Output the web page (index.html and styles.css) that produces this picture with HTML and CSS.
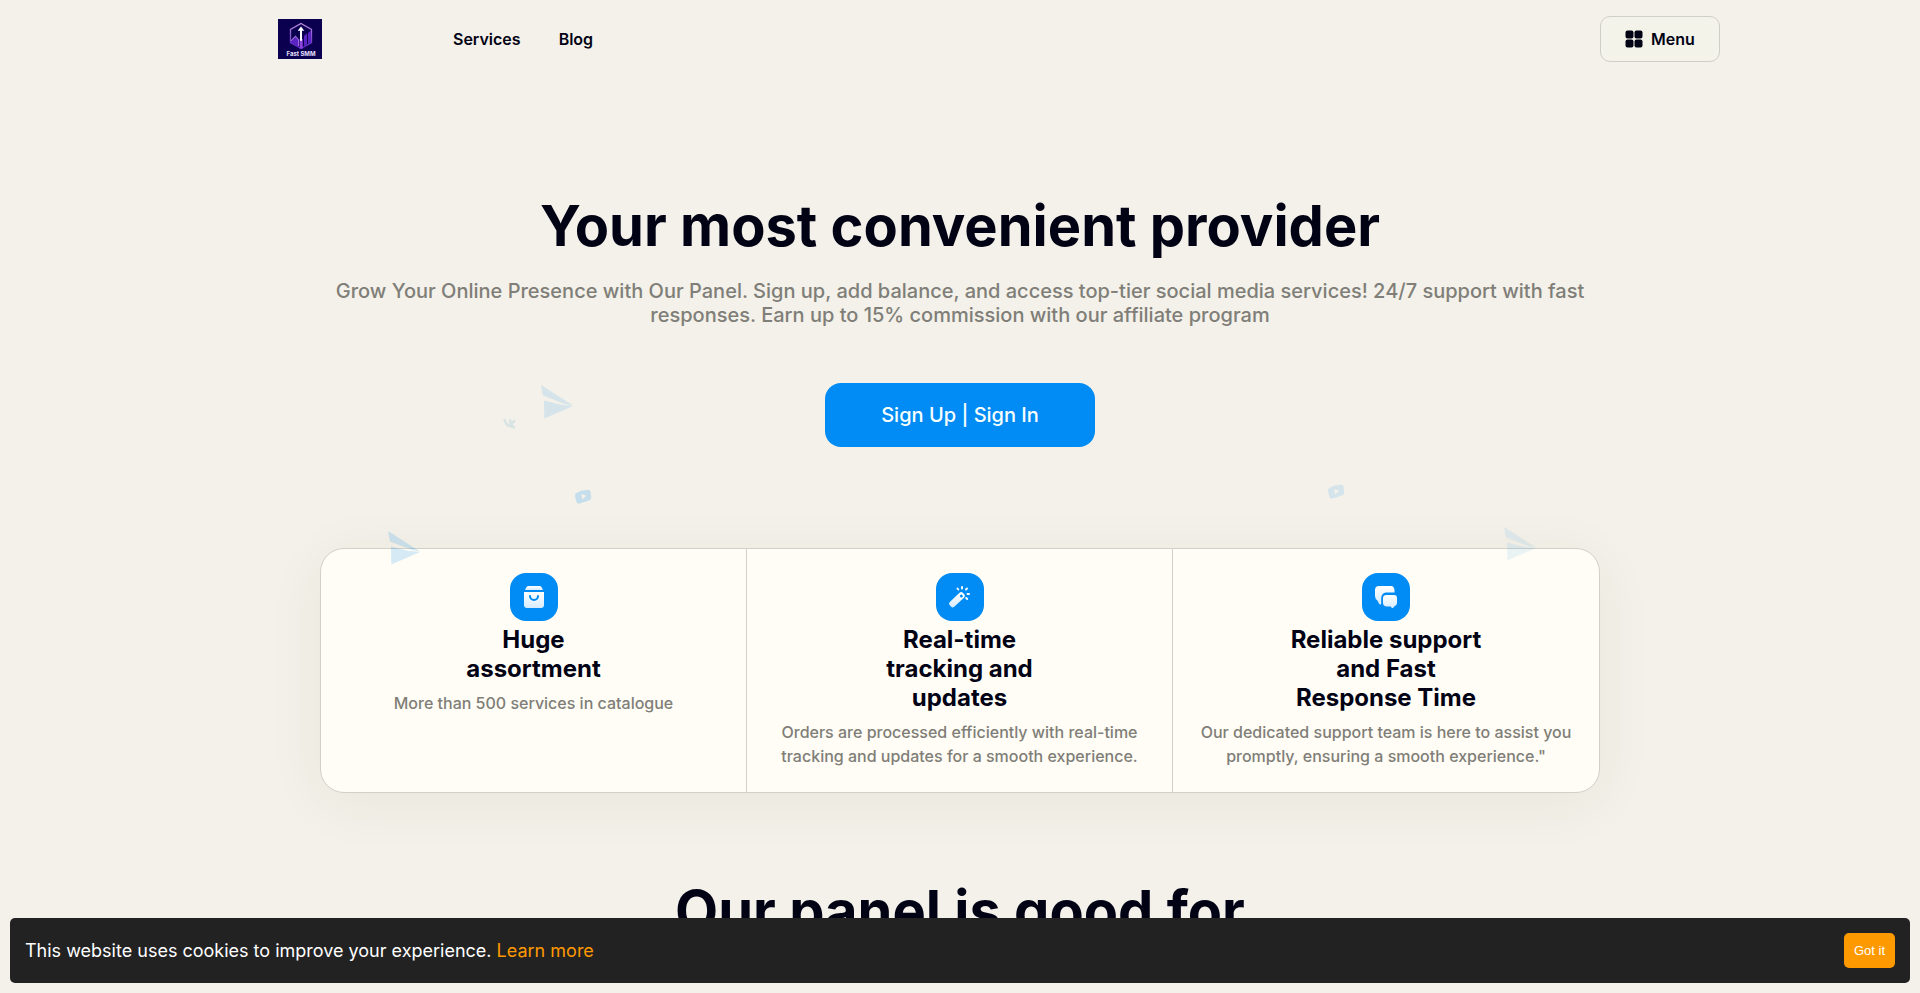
FILE: index.html
```html
<!DOCTYPE html>
<html lang="en">
<head>
<meta charset="utf-8">
<meta name="viewport" content="width=device-width, initial-scale=1">
<title>Fast SMM</title>
<link rel="stylesheet" href="styles.css">
</head>
<body>
<svg class="defs" aria-hidden="true">
  <defs>
    <linearGradient id="white-fade" x1="0" y1="0" x2="0" y2="1">
      <stop offset="0" stop-color="#fff"/><stop offset="1" stop-color="#d6ecff"/>
    </linearGradient>
    <linearGradient id="logo-fade" x1="0" y1="0" x2="0" y2="1">
      <stop offset="0" stop-color="#b98bd8"/><stop offset="1" stop-color="#5a24c4"/>
    </linearGradient>
    <symbol id="plane" viewBox="0 0 32 34"><path d="M0 0 32 20.500 24 19 2 10.500Z M3 15.500 20 19.800 32 21 3.300 33.500Z"/></symbol>
    <symbol id="video" viewBox="0 0 18 16"><path fill-rule="evenodd" d="M2 4.200 5 2.800 7 1.800 14.500 .8Q16.300 1 16.600 3L17.300 8.500Q17.300 10.500 15.500 11.200L5 14.800Q3.200 15 2.500 13L1 7.500Q.6 5 2 4.200ZM7.200 5 8.200 10.600 12.400 6.800Z"/></symbol>
  </defs>
</svg>

<header class="header">
  <a class="logo" href="#" aria-label="Fast SMM">
    <svg viewBox="0 0 44 40" width="44" height="40">
      <path fill="#0b0050" d="M0 0h44v40H0z"/>
      <path fill="none" stroke="url(#logo-fade)" stroke-width="1.300" d="M23 4.500 33.500 10.500V23.500L23 29.500 12.500 23.500V10.500Z"/>
      <path fill="none" stroke="#a06be0" stroke-width="1.200" d="M13 22 17.500 17.500 20.500 21V27"/>
      <path fill="#5a24c4" d="M13 22.500 17.500 18.500 20 21V27.500L12.500 23.500ZM26 17 29 14.500V25.500L26 27ZM30 14 33 11.500V23.500L30 25Z"/>
      <path fill="#8c46df" d="M21.700 20h3v9.500h-3z"/>
      <path fill="#fff" d="m23 7.500 3.300 4.300h-2.300v10h-2v-10h-2.300Z"/>
      <text class="logo-text" x="23" y="37" text-anchor="middle">Fast SMM</text>
    </svg>
  </a>
  <nav class="nav">
    <a href="#">Services</a>
    <a href="#">Blog</a>
  </nav>
  <button class="menu" type="button">
    <svg viewBox="0 0 18 18" width="18" height="18" fill="currentColor" aria-hidden="true">
      <rect x=".5" y=".5" width="8" height="8" rx="2"/><rect x="9.500" y=".5" width="8" height="8" rx="2"/>
      <rect x=".5" y="9.500" width="8" height="8" rx="2"/><rect x="9.500" y="9.500" width="8" height="8" rx="2"/>
    </svg>
    Menu
  </button>
</header>

<main class="main">
  <section class="hero">
    <h1 class="heading">Your most convenient provider</h1>
    <p class="lead">Grow Your Online Presence with Our Panel. Sign up, add balance, and access top-tier social media services! 24/7 support with fast responses. Earn up to 15% commission with our affiliate program</p>
    <a class="cta" href="#">Sign Up | Sign In</a>
  </section>

  <section class="features">
    <article class="feature">
      <span class="badge">
        <svg viewBox="0 0 24 24" width="24" height="24" aria-hidden="true">
          <path fill="url(#white-fade)" d="M6.500 1h11q1.200 0 2 1L21 5H3l1.500-3q.8-1 2-1Z"/>
          <path fill="url(#white-fade)" d="M2 7h20v13a3 3 0 0 1-3 3H5a3 3 0 0 1-3-3Z"/>
          <path fill="none" stroke="#008cf4" stroke-width="2" stroke-linecap="round" d="M8 11a4 4 0 0 0 8 0"/>
        </svg>
      </span>
      <h2 class="feature-title">Huge assortment</h2>
      <p class="feature-text">More than 500 services in catalogue</p>
    </article>
    <article class="feature">
      <span class="badge">
        <svg viewBox="0 0 24 24" width="24" height="24" aria-hidden="true">
          <path fill="url(#white-fade)" fill-rule="evenodd" d="m11.500 7.700-9.700 9.200q-1.500 1.500-.2 3l1.600 1.800q1.500 1.500 3 0l9.800-9q1.900-1.900 0-3.700l-1.200-1.200q-1.700-1.700-3.300-.1ZM12 10.500l1.300-1.200 1.800 1.900-1.300 1.200q-.9.300-1.600-.4t-.2-1.500Z"/>
          <path fill="none" stroke="#effaff" stroke-width="2" stroke-linecap="round" d="M14 2v1.500M9.500 3.500l.8 1M19 3.500l-1 1M19.500 9H21M18.200 13l1 1"/>
        </svg>
      </span>
      <h2 class="feature-title">Real-time tracking and updates</h2>
      <p class="feature-text">Orders are processed efficiently with real-time tracking and updates for a smooth experience.</p>
    </article>
    <article class="feature">
      <span class="badge">
        <svg viewBox="0 0 24 24" width="24" height="24" aria-hidden="true">
          <path fill="url(#white-fade)" d="M5 1h12q3 0 3.500 4v2.500H12Q7.500 8 7.200 13v6q-1 1.200-2.200-.2L3.500 15.500Q1 14 1 11V5Q1 1 5 1Z"/>
          <path fill="url(#white-fade)" d="M12.500 10H20q3 0 3 3v5q0 2.500-2.500 3.300l-1.300 1.500q-1 .7-1.800-.4l-.6-.9H12.500Q9 21 9 18v-5q0-3 3.500-3Z"/>
        </svg>
      </span>
      <h2 class="feature-title">Reliable support and Fast Response Time</h2>
      <p class="feature-text">Our dedicated support team is here to assist you promptly, ensuring a smooth experience."</p>
    </article>
  </section>

  <section class="audience">
    <h2 class="heading">Our panel is good for</h2>
  </section>

  <div class="particles" aria-hidden="true">
    <svg class="particle plane plane-a"><use href="#plane"/></svg>
    <svg class="particle plane plane-b"><use href="#plane"/></svg>
    <svg class="particle plane plane-c"><use href="#plane"/></svg>
    <svg class="particle video video-a"><use href="#video"/></svg>
    <svg class="particle video video-b"><use href="#video"/></svg>
    <svg class="particle vk" viewBox="0 0 14 12"><path fill="none" stroke="#d8e4e4" stroke-width="2.500" d="M1.500 1Q2.500 7.500 8 8.500L7 1.500M12 2.500 8 6 11.500 10.500"/></svg>
  </div>
</main>

<aside class="cookies" aria-label="Cookie notice">
  <p class="cookies-text">This website uses cookies to improve your experience. <a href="#">Learn more</a></p>
  <button class="cookies-button" type="button">Got it</button>
</aside>
</body>
</html>
```

FILE: styles.css
```css
* {
  box-sizing: border-box;
}

body {
  margin: 0;
  min-height: 100vh;
  overflow-x: hidden;
  background: #f3f1e9;
  color: #020215;
  font-family: Inter, "Liberation Sans", sans-serif;
}

h1, h2, p {
  margin: 0;
}

a {
  color: inherit;
  text-decoration: none;
}

.defs {
  position: absolute;
  width: 0;
  height: 0;
}

.header {
  display: flex;
  align-items: center;
  max-width: 1520px;
  margin: 0 auto;
  padding: 16px 0;
}

.logo {
  display: flex;
  margin: 0 131px 0 78px;
}

.logo-text {
  fill: #e8e0ff;
  font: 700 6px Inter, sans-serif;
}

.nav {
  display: flex;
  flex: 1;
  gap: 38px;
  font-size: 16px;
  font-weight: 600;
  line-height: 24px;
}

.menu {
  display: flex;
  align-items: center;
  justify-content: center;
  gap: 8px;
  width: 120px;
  height: 46px;
  padding: 0;
  border: 1px solid #d0cec8;
  border-radius: 10px;
  background: #f4f3ea;
  color: inherit;
  font: 600 16px/24px Inter, sans-serif;
}

.main {
  position: relative;
  max-width: 1280px;
  margin: 0 auto;
  padding-top: 114px;
}

.hero {
  display: flex;
  flex-direction: column;
  align-items: center;
  text-align: center;
}

.heading {
  font-size: 56px;
  font-weight: 700;
  line-height: 68px;
  text-align: center;
}

.lead {
  margin-top: 19px;
  color: #807e78;
  font-size: 20px;
  font-weight: 500;
  line-height: 24px;
}

.cta {
  margin-top: 56px;
  padding: 20px 56px;
  border-radius: 16px;
  background: #008cf4;
  color: #f8fffd;
  font-size: 20px;
  font-weight: 500;
  line-height: 24px;
}

.features {
  display: grid;
  grid-template-columns: repeat(3, 1fr);
  margin-top: 101px;
  border: 1px solid #d2d0c9;
  border-radius: 24px;
  background: #fffdf5;
  box-shadow: 0 10px 60px rgba(60, 50, 40, 0.06);
}

.feature {
  display: flex;
  flex-direction: column;
  align-items: center;
  padding: 24px 20px;
  text-align: center;
}

.feature:not(:last-child) {
  border-right: 1px solid #d2d0c9;
}

.badge {
  display: grid;
  place-items: center;
  width: 48px;
  height: 48px;
  border-radius: 16px;
  background: #008cf4;
}

.feature-title {
  max-width: 200px;
  margin: 4px 0 8px;
  font-size: 24px;
  font-weight: 700;
  line-height: 29px;
}

.feature-text {
  color: #807e78;
  font-size: 16px;
  font-weight: 500;
  line-height: 24px;
}

.audience {
  padding-top: 84px;
}

.particles {
  position: absolute;
  inset: 0;
  pointer-events: none;
}

.particle {
  position: absolute;
  fill: #008cf4;
}

.plane {
  width: 32px;
  height: 34px;
  opacity: 0.12;
}

.plane-a {
  left: 221px;
  top: 307px;
}

.plane-b {
  left: 68px;
  top: 453px;
  opacity: 0.16;
}

.plane-c {
  left: 1184px;
  top: 449px;
  opacity: 0.08;
}

.video {
  width: 18px;
  height: 16px;
}

.video-a {
  left: 254px;
  top: 411px;
  opacity: 0.18;
}

.video-b {
  left: 1007px;
  top: 406px;
  opacity: 0.12;
}

.vk {
  left: 183px;
  top: 340px;
  width: 14px;
  height: 12px;
}

.cookies {
  position: fixed;
  right: 10px;
  bottom: 10px;
  left: 10px;
  display: flex;
  align-items: center;
  justify-content: space-between;
  padding: 15px;
  border-radius: 5px;
  background: #222;
}

.cookies-text {
  color: #fff;
  font-size: 18px;
  line-height: 22px;
}

.cookies-text a {
  color: #f90;
}

.cookies-button {
  height: 35px;
  padding: 0 10px;
  border: 0;
  border-radius: 5px;
  background: #f90;
  color: #fff;
  font: 13px "Liberation Sans", sans-serif;
}
```
